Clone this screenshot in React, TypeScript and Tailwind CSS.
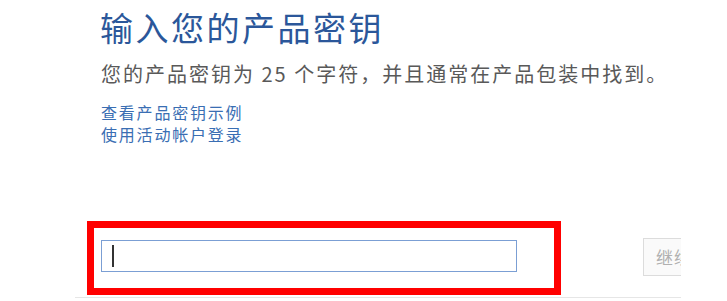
import React from "react";

export default function App() {
  const font = { fontFamily: '"Noto Sans CJK SC", "Noto Sans", sans-serif' };
  return (
    <div className="w-[727px] h-[301px] bg-white overflow-hidden" style={font}>
      <div className="w-[681px] h-[301px] overflow-hidden flex flex-col">
        <div className="pl-[100px] pt-[7px] flex flex-col">
          <h1 className="text-[33px] leading-[40px] tracking-[2.5px] text-[#2b579a] font-normal whitespace-nowrap">
            输入您的产品密钥
          </h1>
          <p className="mt-[13px] text-[20px] leading-[28px] tracking-[2px] text-[#595959] whitespace-nowrap pl-[1px]">
            您的产品密钥为 25 个字符，并且通常在产品包装中找到。
          </p>
          <div className="mt-[13px] flex flex-col pl-[1px] text-[16px] leading-[22px] tracking-[1.8px] text-[#3a6eb3]">
            <span>查看产品密钥示例</span>
            <span>使用活动帐户登录</span>
          </div>
        </div>
        <div className="mt-[76px] pl-[87px] flex items-start">
          <div className="w-[474px] h-[74px] shrink-0 border-[7px] border-[#ff0000] pl-[7px] pt-[12px]">
            <div className="w-[416px] h-[32px] border border-[#7b9fd4] bg-white flex items-center pl-[10px]">
              <div className="w-[2px] h-[22px] bg-[#333333]" />
            </div>
          </div>
          <div className="ml-[82px] mt-[17px] h-[38px] w-[80px] shrink-0 border border-[#dcdcdc] bg-[#fafafa] pl-[12px] flex items-center text-[17px] text-[#b0b0b0] tracking-[1px]">
            继续
          </div>
        </div>
        <div className="mt-[2px] ml-[75px] h-[1px] bg-[#e6e6e6]" />
      </div>
    </div>
  );
}
